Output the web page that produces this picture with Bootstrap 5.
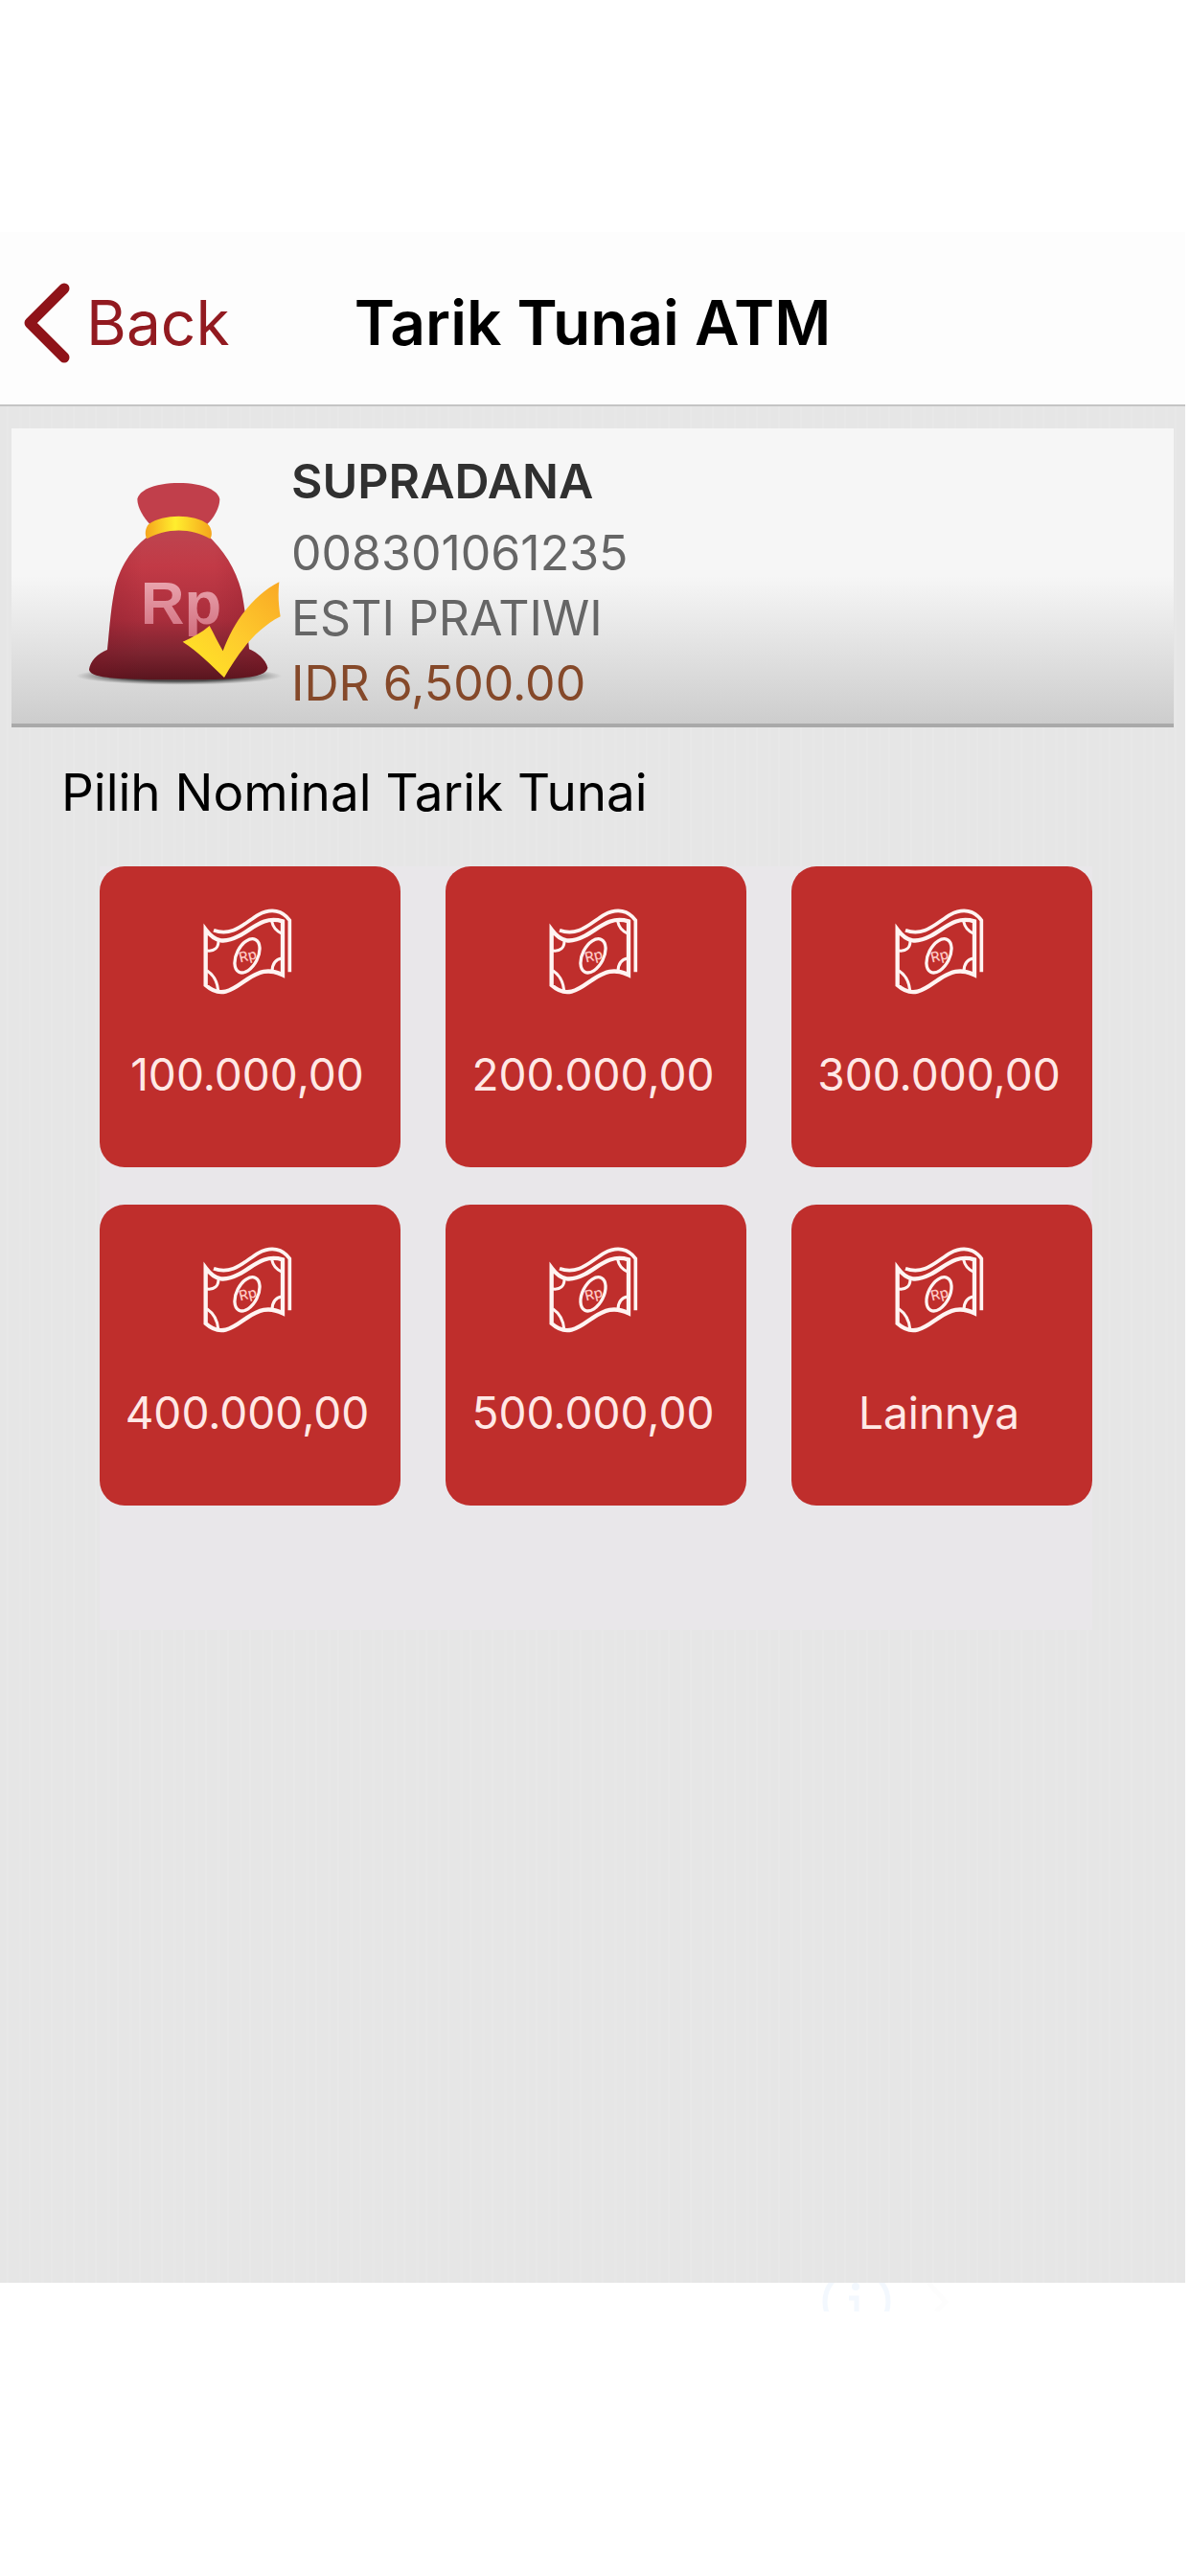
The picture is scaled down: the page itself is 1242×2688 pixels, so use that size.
<!DOCTYPE html>
<html lang="id">
<head>
<meta charset="utf-8">
<meta name="viewport" content="width=device-width, initial-scale=1">
<title>Tarik Tunai ATM</title>
<link href="https://cdn.jsdelivr.net/npm/bootstrap@5.3.0/dist/css/bootstrap.min.css" rel="stylesheet">
<style>
  body { font-family: Inter, "Liberation Sans", sans-serif; background: #fff; color: #000; }
  .app-shell { padding: 242px 5px 0 0; }
  .app-header { height: 182px; background: #fdfdfd; border-bottom: 2px solid #c4c4c4; padding: 10px 24px 0; }
  .header-side { flex: 1 1 0; }
  .back-link { color: #921a20; font-size: 64px; line-height: 76px; gap: 16px; }
  .app-title { font-size: 64px; line-height: 76px; font-weight: 600; }
  .app-body {
    background: repeating-linear-gradient(90deg, #e6e6e6 0 7px, #e8e8e8 7px 9px, #e6e6e6 9px 20px, #e7e7e7 20px 23px);
    padding: 23px 12px 0;
  }
  .account-card {
    background: linear-gradient(#f6f6f6 0, #f6f6f6 50%, #cdcdcd 100%);
    border-bottom: 4px solid #a9a9a9; padding: 18px 16px 8px 68px; gap: 9px;
    font-size: 50px; line-height: 68px; color: #666;
  }
  .account-card svg { margin-top: 6px; }
  .account-name { line-height: 74px; font-weight: 600; color: #303030; margin-bottom: 4px; }
  .account-balance { color: #85492a; }
  .section-title { font-size: 53px; line-height: 68px; font-weight: 400; margin: 34px 52px 43px; }
  .amount-grid { display: grid; grid-template-columns: repeat(3, 1fr); gap: 39px 47px; margin: 0 85px 0 92px; padding-bottom: 130px; background: #e9e7ea; }
  .amount-btn { height: 314px; border: 0; border-radius: 26px; background: #bf2e2c; color: #ffe9e6; font-size: 46px; line-height: 60px; padding: 41px 6px 0 0; }
  .amount-btn:hover, .amount-btn:active { background: #a92624 !important; color: #fff !important; }
  .amount-btn svg { margin-bottom: 50px; }
  .app-footer { height: 306px; padding-left: 856px; }
</style>
</head>
<body>
<svg class="d-none" aria-hidden="true">
  <symbol id="cash" viewBox="90 75 288 288">
    <g fill="none" stroke="#fff4f2" stroke-width="13">
      <path d="M104 150C135 192 165 192 208 170C255 145 285 107 345 124V292C300 270 270 282 232 307C195 332 155 370 104 324Z"/>
      <path d="M129 152C190 175 230 125 270 103C310 82 345 90 367 121V283" stroke-width="11"/>
      <path stroke-width="9" d="M108 216C132 219 144 207 144 185M108 278C127 291 140 310 143 340M311 124C315 145 325 155 342 162M312 282C312 258 322 243 343 240"/>
      <ellipse cx="234" cy="232" rx="33" ry="57" transform="rotate(27 234 232)" stroke-width="10"/>
    </g>
    <text x="208" y="248" font-family="Inter, sans-serif" font-size="44" font-weight="500" fill="#ffc9c3" transform="rotate(-14 234 234)">Rp</text>
  </symbol>
</svg>

<div class="app-shell d-flex flex-column min-vh-100">
  <header class="app-header d-flex align-items-center">
    <div class="header-side d-flex">
      <a href="#" class="back-link d-flex align-items-center text-decoration-none">
        <svg width="50" height="84" viewBox="0 0 50 84" aria-hidden="true"><path d="M43 6L7 42L43 78" fill="none" stroke="#8f1319" stroke-width="11" stroke-linecap="round" stroke-linejoin="round"/></svg>
        <span>Back</span>
      </a>
    </div>
    <h1 class="app-title mb-0 text-nowrap">Tarik Tunai ATM</h1>
    <div class="header-side"></div>
  </header>

  <main class="app-body flex-grow-1">
    <section class="account-card d-flex align-items-center">
      <svg class="flex-shrink-0" width="215" height="214" viewBox="240 216 645 642" role="img" aria-label="Rp">
        <defs>
          <linearGradient id="bag" x1="0" y1="0" x2="0" y2="1"><stop offset="0" stop-color="#bd4550"/><stop offset=".25" stop-color="#c23a46"/><stop offset=".6" stop-color="#a92e3c"/><stop offset=".82" stop-color="#7d2430"/><stop offset="1" stop-color="#59151e"/></linearGradient>
          <linearGradient id="bagside"><stop offset="0" stop-color="#7b1020" stop-opacity=".3"/><stop offset=".3" stop-color="#7b1020" stop-opacity="0"/><stop offset=".7" stop-color="#7b1020" stop-opacity="0"/><stop offset="1" stop-color="#7b1020" stop-opacity=".3"/></linearGradient>
          <linearGradient id="band"><stop offset="0" stop-color="#f5a51c"/><stop offset=".45" stop-color="#ffee2e"/><stop offset="1" stop-color="#f5a51c"/></linearGradient>
          <linearGradient id="tick" x1="0" y1="1" x2="1" y2="0"><stop offset="0" stop-color="#ffe925"/><stop offset=".5" stop-color="#fecb2d"/><stop offset="1" stop-color="#f9a824"/></linearGradient>
          <linearGradient id="rp" x1="0" y1="0" x2="0" y2="1"><stop offset="0" stop-color="#efb0b8"/><stop offset="1" stop-color="#d16e7e"/></linearGradient>
          <radialGradient id="shade"><stop offset=".6" stop-color="#333" stop-opacity=".85"/><stop offset="1" stop-color="#555" stop-opacity="0"/></radialGradient>
        </defs>
        <ellipse cx="560" cy="826" rx="322" ry="28" fill="url(#shade)"/>
        <path d="M470 352C450 330 430 300 430 272C438 238 500 222 560 222C620 222 680 238 688 272C688 300 670 330 648 352Z" fill="#c13f4b"/>
        <path d="M475 380C410 425 372 490 358 560C346 620 342 690 336 744C305 756 283 780 279 806C285 828 330 838 560 838C790 838 832 826 838 800C832 775 805 752 780 742C775 690 768 620 756 560C738 490 700 430 645 380C600 360 520 360 475 380Z" fill="url(#bag)"/>
        <path d="M475 380C410 425 372 490 358 560C346 620 342 690 336 744C305 756 283 780 279 806C285 828 330 838 560 838C790 838 832 826 838 800C832 775 805 752 780 742C775 690 768 620 756 560C738 490 700 430 645 380C600 360 520 360 475 380Z" fill="url(#bagside)"/>
        <path d="M466 350C510 318 610 318 650 350C664 364 666 385 658 397C600 362 520 362 460 397C452 382 455 362 466 350Z" fill="url(#band)"/>
        <text x="440" y="663" font-family="'Liberation Sans', sans-serif" font-weight="700" font-size="190" fill="url(#rp)">Rp</text>
        <path d="M572 719C602 706 632 690 656 669C670 695 683 722 698 748C730 660 790 575 874 532C870 570 872 605 878 640C800 680 745 755 702 831C660 790 620 750 572 719Z" fill="url(#tick)"/>
      </svg>
      <div class="text-nowrap">
        <div class="account-name">SUPRADANA</div>
        <div>008301061235</div>
        <div>ESTI PRATIWI</div>
        <div class="account-balance">IDR 6,500.00</div>
      </div>
    </section>

    <h2 class="section-title">Pilih Nominal Tarik Tunai</h2>

    <div class="amount-grid">
      <button type="button" class="btn amount-btn d-flex flex-column align-items-center"><svg width="96" height="96" aria-hidden="true"><use href="#cash"/></svg><span>100.000,00</span></button>
      <button type="button" class="btn amount-btn d-flex flex-column align-items-center"><svg width="96" height="96" aria-hidden="true"><use href="#cash"/></svg><span>200.000,00</span></button>
      <button type="button" class="btn amount-btn d-flex flex-column align-items-center"><svg width="96" height="96" aria-hidden="true"><use href="#cash"/></svg><span>300.000,00</span></button>
      <button type="button" class="btn amount-btn d-flex flex-column align-items-center"><svg width="96" height="96" aria-hidden="true"><use href="#cash"/></svg><span>400.000,00</span></button>
      <button type="button" class="btn amount-btn d-flex flex-column align-items-center"><svg width="96" height="96" aria-hidden="true"><use href="#cash"/></svg><span>500.000,00</span></button>
      <button type="button" class="btn amount-btn d-flex flex-column align-items-center"><svg width="96" height="96" aria-hidden="true"><use href="#cash"/></svg><span>Lainnya</span></button>
    </div>
  </main>

  <footer class="app-footer">
    <svg class="d-block" width="140" height="30" viewBox="0 0 140 30" aria-hidden="true">
      <g fill="none" stroke="#f3f8fe" stroke-width="5"><circle cx="38" cy="20" r="33"/><path d="M30 16H38V30"/></g><circle cx="37" cy="4" r="4" fill="#f3f8fe"/>
      <path d="M113 0L131 20L121 30" fill="none" stroke="#fdfdfd" stroke-width="5"/>
    </svg>
  </footer>
</div>
<script src="https://cdn.jsdelivr.net/npm/bootstrap@5.3.0/dist/js/bootstrap.bundle.min.js"></script>
</body>
</html>
